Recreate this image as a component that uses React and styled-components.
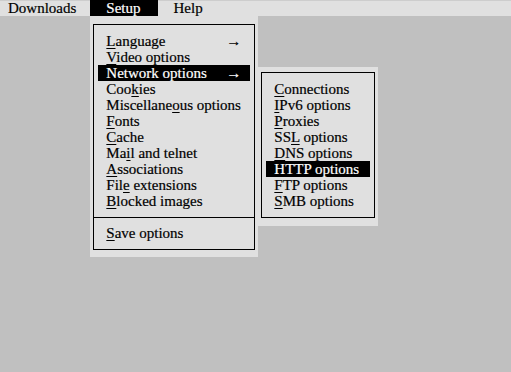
import React from "react";
import styled, { createGlobalStyle } from "styled-components";

const GlobalStyle = createGlobalStyle`
  html, body {
    margin: 0;
    padding: 0;
    background: #c0c0c0;
  }
  body {
    font-family: "Liberation Serif", "Times New Roman", serif;
    font-size: 15px;
    color: #000;
    -webkit-text-stroke: 0.2px currentColor;
  }
`;

const Screen = styled.div`
  width: 511px;
  height: 372px;
  background: #c0c0c0;
  overflow: hidden;
`;

const MenuBar = styled.div`
  display: flex;
  height: 16px;
  background: #e0e0e0;
  box-shadow: inset 0 1px 0 #cdcdcd;
`;

const BarSlot = styled.div`
  position: relative;
`;

const BarItem = styled.div`
  height: 16px;
  line-height: 17px;
  padding: 0 17px 0 16px;
  white-space: nowrap;
  background: ${(p) => (p.$active ? "#000" : "transparent")};
  color: ${(p) => (p.$active ? "#fff" : "#000")};

  &.first {
    padding: 0 14px 0 8px;
  }
`;

const Panel = styled.div`
  position: absolute;
  box-sizing: border-box;
  background: #e0e0e0;
  width: ${(p) => p.$width}px;
  padding: ${(p) => p.$pad};
  z-index: 2;
`;

const Dropdown = styled(Panel)`
  left: 0;
  top: 100%;
`;

const Submenu = styled(Panel)`
  left: 100%;
  top: 51px;
`;

const Frame = styled.div`
  border: 1px solid #000;
  padding: 8px 4px;
`;

const Item = styled.div`
  display: flex;
  justify-content: space-between;
  align-items: center;
  height: 16px;
  line-height: 16px;
  padding: 0 9px 0 8px;
  white-space: nowrap;
  background: ${(p) => (p.$active ? "#000" : "transparent")};
  color: ${(p) => (p.$active ? "#fff" : "#000")};
`;

const Arrow = styled.span`
  font-size: 15px;
`;

const Key = styled.span`
  text-decoration: underline;
  text-underline-offset: 2px;
  text-decoration-thickness: 1px;
`;

const Separator = styled.div`
  height: 16px;
  display: flex;
  align-items: center;
  margin: 0 -4px;

  &::after {
    content: "";
    flex: 1;
    height: 1px;
    background: #000;
  }
`;

// label with the accelerator letter at index k
function Label({ text, k }) {
  if (k == null) return <span>{text}</span>;
  return (
    <span>
      {text.slice(0, k)}
      <Key>{text[k]}</Key>
      {text.slice(k + 1)}
    </span>
  );
}

const setupItems = [
  { text: "Language", k: 0, arrow: true },
  { text: "Video options", k: 0 },
  { text: "Network options", arrow: true, active: true },
  { text: "Cookies", k: 3 },
  { text: "Miscellaneous options", k: 10 },
  { text: "Fonts", k: 0 },
  { text: "Cache", k: 0 },
  { text: "Mail and telnet", k: 2 },
  { text: "Associations", k: 0 },
  { text: "File extensions", k: 3 },
  { text: "Blocked images", k: 0 },
];

const networkItems = [
  { text: "Connections", k: 0 },
  { text: "IPv6 options", k: 0 },
  { text: "Proxies", k: 0 },
  { text: "SSL options", k: 2 },
  { text: "DNS options", k: 0 },
  { text: "HTTP options", active: true },
  { text: "FTP options", k: 0 },
  { text: "SMB options", k: 0 },
];

export default function App() {
  return (
    <Screen>
      <GlobalStyle />
      <MenuBar>
        <BarItem className="first">Downloads</BarItem>
        <BarSlot>
          <BarItem $active>Setup</BarItem>
          <Dropdown $width={168} $pad="8px 3px 7px 3px">
            <Frame>
              {setupItems.map((it, i) => (
                <Item key={i} $active={it.active}>
                  <Label text={it.text} k={it.k} />
                  {it.arrow && <Arrow>→</Arrow>}
                </Item>
              ))}
              <Separator />
              <Item>
                <Label text="Save options" k={0} />
              </Item>
            </Frame>
            <Submenu $width={120} $pad="5px 3px 8px 3px">
              <Frame>
                {networkItems.map((it, i) => (
                  <Item key={i} $active={it.active}>
                    <Label text={it.text} k={it.k} />
                  </Item>
                ))}
              </Frame>
            </Submenu>
          </Dropdown>
        </BarSlot>
        <BarItem>Help</BarItem>
      </MenuBar>
    </Screen>
  );
}
